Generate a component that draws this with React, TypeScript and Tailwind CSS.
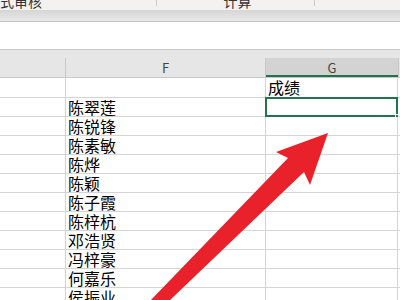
import React from 'react'

const NAMES = ['陈翠莲', '陈锐锋', '陈素敏', '陈烨', '陈颖', '陈子霞', '陈梓杭', '邓浩贤', '冯梓豪', '何嘉乐', '侯振业']

const FONT = { fontFamily: '"Noto Sans CJK SC", "Noto Sans", sans-serif' }

function Row({ name, score, selected, first }: { name?: string; score?: string; selected?: boolean; first?: boolean }) {
  return (
    <div className={`flex border-b border-[#d4d4d4] ${first ? 'h-[20px]' : 'h-[19px]'}`}>
      <div className="w-[66px] shrink-0 border-r border-[#d4d4d4]" />
      <div className="w-[200px] shrink-0 border-r border-[#d4d4d4] pl-[2px] text-[16px] leading-[19px] text-black">{name}</div>
      <div className="relative w-[132px] shrink-0 border-r border-[#d4d4d4] pl-[2px] text-[16px] leading-[19px] text-black">
        {score}
        {selected && (
          <div className="absolute -top-[1px] -left-[1px] -right-[1px] -bottom-[1px] border-2 border-[#22724a]">
            <div className="absolute -right-[3px] -bottom-[3px] w-[4px] h-[4px] bg-[#22724a] border border-white" />
          </div>
        )}
      </div>
      <div className="flex-1" />
    </div>
  )
}

export default function App() {
  return (
    <div className="relative w-[400px] h-[300px] overflow-hidden bg-white" style={FONT}>
      {/* ribbon group labels */}
      <div className="flex h-[10px] overflow-hidden bg-[#f3f2f0] text-[14px] leading-[14px] text-[#333]">
        <div className="w-[157px] shrink-0 border-r border-[#c8c8c8] h-[6px]">
          <span className="block -mt-[6px]">式审核</span>
        </div>
        <div className="w-[158px] shrink-0 border-r border-[#c8c8c8] h-[6px] text-center">
          <span className="block -mt-[6px] pl-[4px]">计算</span>
        </div>
        <div className="flex-1" />
      </div>
      <div className="h-[12px] bg-gradient-to-b from-[#d6d6d6] to-[#e7e7e7] border-b border-[#c4c4c4]" />

      {/* formula bar area */}
      <div className="h-[28px] bg-white border-b border-[#c8c8c8]" />

      {/* column headers */}
      <div className="h-[28px] bg-[#e6e6e6] pt-[8px] border-b border-[#c8c8c8]">
        <div className="flex h-[19px] text-[13px] leading-[19px] text-[#444]">
          <div className="w-[66px] shrink-0 border-r border-[#c8c8c8]" />
          <div className="w-[200px] shrink-0 border-r border-[#c8c8c8] text-center">F</div>
          <div className="w-[132px] shrink-0 bg-[#d3d3d3] border-b-2 border-[#22724a] text-center">G</div>
          <div className="flex-1 border-l border-[#c8c8c8]" />
        </div>
      </div>

      <Row first score="成绩" />
      <Row name={NAMES[0]} selected />
      {NAMES.slice(1).map((n) => (
        <Row key={n} name={n} />
      ))}

      {/* red arrow overlay */}
      <svg className="absolute left-0 top-0" width="400" height="300" viewBox="0 0 400 300">
        <polygon
          points="328,133 310,185 304,172 168,302 149,302 288,158 276,152"
          fill="#e8212b"
        />
      </svg>
    </div>
  )
}
